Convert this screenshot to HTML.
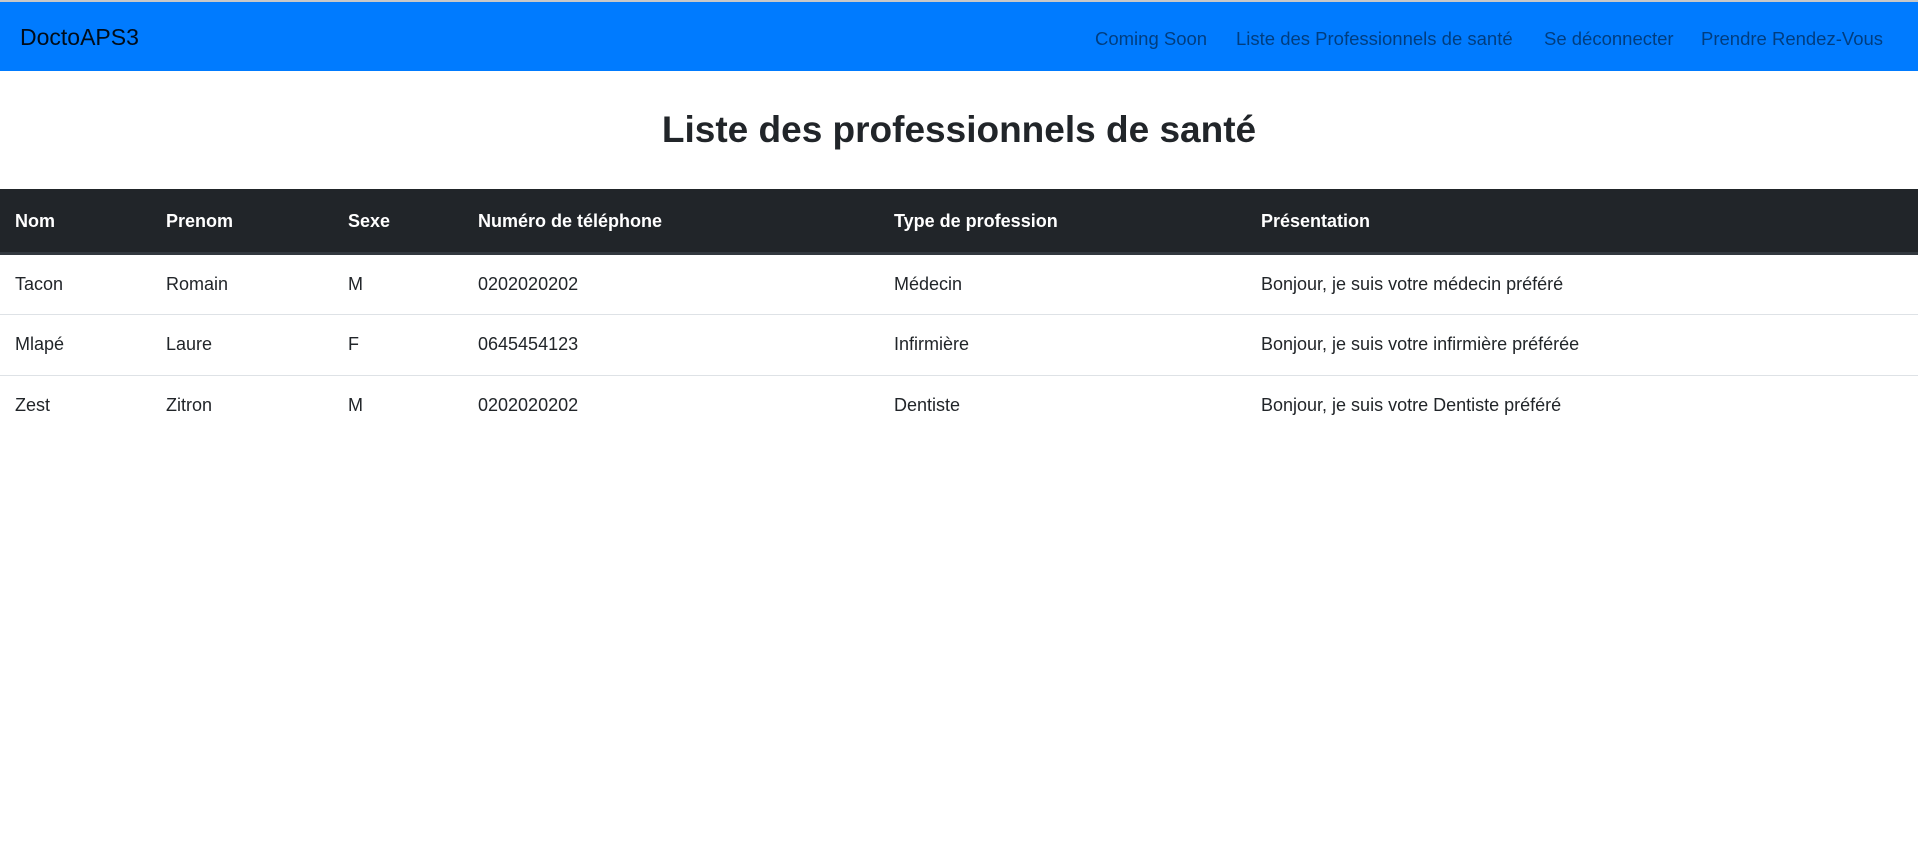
<!DOCTYPE html>
<html><head><meta charset="utf-8"><style>
*{box-sizing:border-box;margin:0;padding:0}
body{width:1918px;height:850px;background:#fff;font-family:"Liberation Sans",sans-serif;color:#212529;overflow:hidden}
.nav{position:absolute;top:1px;left:0;width:1918px;height:70px;background:#007bff;border-top:1px solid #ccc}
.top{position:absolute;top:0;left:0;width:1918px;height:2px;background:#c8c8c8}
.brand{position:absolute;left:20px;top:24px;font-size:23px;color:rgba(0,0,0,.9)}
.links{position:absolute;top:28px;font-size:18.5px;color:rgba(0,0,0,.5);white-space:nowrap}
h2{position:absolute;top:106px;left:0;width:1918px;text-align:center;font-size:37px;font-weight:bold;line-height:48px}
table{position:absolute;top:189px;left:0;width:1918px;border-collapse:collapse;table-layout:fixed;font-size:18px}
th{background:#212529;color:#fff;text-align:left;height:64px;padding:3px 0 0 15px;border-bottom:3px solid #32383e;font-weight:bold}
td{height:61px;padding:0 0 0 15px;border-bottom:1px solid #dee2e6}
tr:last-child td{border-bottom:none}
</style></head><body>
<div class="nav"></div><div class="top"></div>
<div class="brand">DoctoAPS3</div>
<div class="links" style="left:1095px">Coming Soon</div>
<div class="links" style="left:1236px">Liste des Professionnels de santé</div>
<div class="links" style="left:1544px">Se déconnecter</div>
<div class="links" style="left:1701px">Prendre Rendez-Vous</div>
<h2>Liste des professionnels de santé</h2>
<table>
<colgroup><col style="width:151px"><col style="width:182px"><col style="width:130px"><col style="width:416px"><col style="width:367px"><col></colgroup>
<tr><th>Nom</th><th>Prenom</th><th>Sexe</th><th>Numéro de téléphone</th><th>Type de profession</th><th>Présentation</th></tr>
<tr><td>Tacon</td><td>Romain</td><td>M</td><td>0202020202</td><td>Médecin</td><td>Bonjour, je suis votre médecin préféré</td></tr>
<tr><td>Mlapé</td><td>Laure</td><td>F</td><td>0645454123</td><td>Infirmière</td><td>Bonjour, je suis votre infirmière préférée</td></tr>
<tr><td>Zest</td><td>Zitron</td><td>M</td><td>0202020202</td><td>Dentiste</td><td>Bonjour, je suis votre Dentiste préféré</td></tr>
</table>
</body></html>
